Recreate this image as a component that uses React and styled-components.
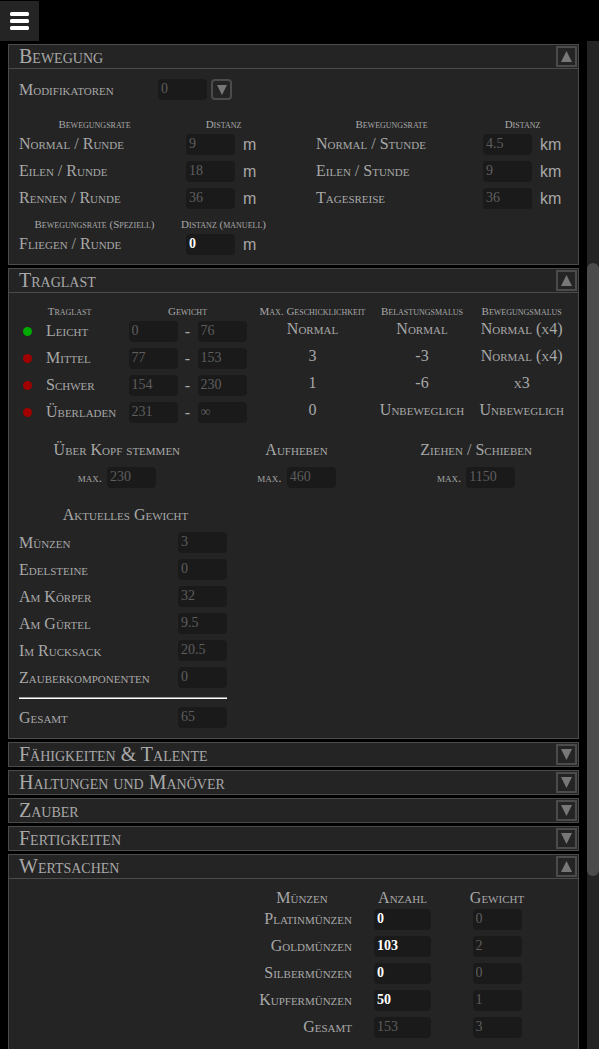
import React, { useState } from "react";
import styled, { createGlobalStyle } from "styled-components";

const serif = `"Liberation Serif", serif`;
const sans = `"Liberation Sans", sans-serif`;

const GlobalStyle = createGlobalStyle`
  *, *::before, *::after { box-sizing: border-box; }
  body {
    margin: 0;
    background: #000;
    color: #a8a8a8;
    font: 16px/20px ${serif};
  }
`;

const Page = styled.div`
  display: flex;
  flex-direction: column;
  height: 100vh;
`;

const TopBar = styled.header`
  padding-top: 1px;
  flex: none;
`;

const MenuButton = styled.button`
  display: flex;
  align-items: center;
  justify-content: center;
  width: 39px;
  height: 40px;
  padding: 0;
  border: 0;
  background: #242424;
  color: #fff;
`;

const Viewport = styled.div`
  display: flex;
  flex: 1;
  min-height: 0;
`;

const Sheet = styled.main`
  flex: 1;
  min-width: 0;
  padding: 3px 8px 0;
  overflow-y: auto;
  scrollbar-width: none;
  font-variant: small-caps;
`;

const ScrollTrack = styled.div`
  display: flex;
  flex-direction: column;
  flex: none;
  width: 12px;
  background: #242424;

  &::before { content: ""; flex: 222; }
  &::after { content: ""; flex: 173; }
`;

const ScrollThumb = styled.div`
  flex: 613;
  border-radius: 6px;
  background: #4b4b4b;
`;

const Panel = styled.section`
  margin-bottom: 3px;
  border: 1px solid #4b4b4b;
  background: #242424;
`;

const PanelHeader = styled.div`
  display: flex;
  align-items: center;
  justify-content: space-between;
  height: ${(p) => (p.$open ? 24 : 23)}px;
  padding: 0 1px 0 10px;
  border-bottom: ${(p) => (p.$open ? "1px solid #4b4b4b" : "0")};
`;

const PanelTitle = styled.h2`
  margin: 0;
  font-size: 20px;
  font-weight: normal;
  line-height: 23px;
`;

const ArrowButton = styled.button`
  display: flex;
  align-items: center;
  justify-content: center;
  flex: none;
  width: 21px;
  height: 21px;
  padding: 0;
  border: 2px solid #4b4b4b;
  border-radius: ${(p) => (p.$rounded ? 4 : 0)}px;
  background: #242424;
  color: #777;
`;

const PanelBody = styled.div`
  padding: ${(p) => p.$top}px 0 ${(p) => p.$bottom}px 10px;
`;

const ValueBox = styled.input`
  flex: none;
  width: ${(p) => (p.$wide ? 57 : 49)}px;
  height: 21px;
  padding: 0 3px 2px;
  border: 0;
  border-radius: 4px;
  outline: 0;
  background: #1a1a1a;
  color: ${(p) => (p.readOnly ? "#5e5e5e" : "#fff")};
  font: ${(p) => (p.readOnly ? "normal" : "bold")} 14px/18px ${serif};
`;

const ModifierRow = styled.div`
  display: flex;
  align-items: center;
  gap: 4px;
  margin-bottom: 18px;
`;

const ModifierLabel = styled.label`
  width: 135px;
`;

const MovementGrid = styled.div`
  display: grid;
  grid-template-columns: 297fr 262fr;
  row-gap: 6px;
`;

const DataTable = styled.table`
  width: ${(p) => p.$width || "100%"};
  border-collapse: collapse;
  table-layout: fixed;
`;

const HeadCell = styled.th`
  height: ${(p) => (p.$large ? 17 : 13)}px;
  padding: 0;
  font-size: ${(p) => (p.$large ? 16 : 11)}px;
  font-weight: normal;
  line-height: ${(p) => (p.$large ? 17 : 13)}px;
  text-align: center;
  white-space: nowrap;
`;

const LoadHeadCell = styled(HeadCell)`
  padding-right: 30px;
`;

const LabelCell = styled.th`
  height: 27px;
  padding: 0 0 2px;
  font-weight: normal;
  text-align: ${(p) => p.$align || "left"};
  white-space: nowrap;
`;

const Cell = styled.td`
  height: 27px;
  padding: 0;
`;

const ResultCell = styled(Cell)`
  padding-bottom: 6px;
  text-align: center;
  white-space: nowrap;
`;

const Measure = styled.div`
  display: flex;
  align-items: center;
  gap: 8px;
  padding-left: 16px;
`;

const Unit = styled.span`
  font-family: ${sans};
  font-variant: normal;
`;

const Range = styled.div`
  display: flex;
  align-items: center;
  justify-content: center;
`;

const Dash = styled.span`
  width: 20px;
  text-align: center;
`;

const StatusDot = styled.span`
  display: block;
  width: 9px;
  height: 9px;
  margin-left: 4px;
  border-radius: 50%;
  background: ${(p) => (p.$active ? "#00aa00" : "#a00000")};
`;

const LiftGrid = styled.div`
  display: grid;
  grid-template-columns: repeat(3, 1fr);
  margin: 14px 12px 17px 8px;
`;

const Lift = styled.div`
  display: flex;
  flex-direction: column;
  align-items: center;
  gap: 7px;
`;

const LiftLimit = styled.label`
  display: flex;
  align-items: center;
  gap: 5px;
  font-size: 13px;
`;

const WeightBlock = styled.div`
  width: 208px;
`;

const WeightTitle = styled.h3`
  margin: 0 0 4px;
  padding-left: 5px;
  font-size: 16px;
  font-weight: normal;
  line-height: 20px;
  text-align: center;
`;

const WeightRow = styled.div`
  display: flex;
  align-items: center;
  justify-content: space-between;
  height: 27px;
`;

const Rule = styled.hr`
  height: 2px;
  margin: 6px 0 5px;
  border: 0;
  border-top: 1px solid #999;
  background: #fff;
`;

const CoinTable = styled(DataTable)`
  margin-left: auto;
  margin-right: 37px;
`;

const Centered = styled.div`
  display: flex;
  justify-content: center;
`;

function Arrow({ up, size = 11 }) {
  return (
    <svg width={size} height={size} viewBox="0 0 11 11" aria-hidden="true">
      <path d={up ? "M5.5 0L11 11H0z" : "M0 0H11L5.5 11z"} fill="currentColor" />
    </svg>
  );
}

function Value({ value, editable, ...rest }) {
  return <ValueBox type="text" defaultValue={value} readOnly={!editable} {...rest} />;
}

function Section({ title, defaultOpen = false, top = 10, bottom = 10, children }) {
  const [open, setOpen] = useState(defaultOpen);
  return (
    <Panel>
      <PanelHeader $open={open}>
        <PanelTitle>{title}</PanelTitle>
        <ArrowButton
          type="button"
          aria-label={title}
          aria-expanded={open}
          onClick={() => setOpen(!open)}
        >
          <Arrow up={open} />
        </ArrowButton>
      </PanelHeader>
      {open && <PanelBody $top={top} $bottom={bottom}>{children}</PanelBody>}
    </Panel>
  );
}

function MovementTable({ id, heads, unit, rows, width }) {
  return (
    <DataTable $width={width}>
      <colgroup>
        <col width="151" />
        <col />
      </colgroup>
      <thead>
        <tr>
          {heads.map((h) => (
            <HeadCell key={h} scope="col">{h}</HeadCell>
          ))}
        </tr>
      </thead>
      <tbody>
        {rows.map(([name, value, editable], i) => (
          <tr key={name}>
            <LabelCell scope="row">
              <label htmlFor={id + i}>{name}</label>
            </LabelCell>
            <Cell>
              <Measure>
                <Value id={id + i} value={value} editable={editable} />
                <Unit>{unit}</Unit>
              </Measure>
            </Cell>
          </tr>
        ))}
      </tbody>
    </DataTable>
  );
}

const loads = [
  ["Leicht", "0", "76", "Normal", "Normal", "Normal (x4)"],
  ["Mittel", "77", "153", "3", "-3", "Normal (x4)"],
  ["Schwer", "154", "230", "1", "-6", "x3"],
  ["Überladen", "231", "∞", "0", "Unbeweglich", "Unbeweglich"],
];

const lifts = [
  ["Über Kopf stemmen", "230"],
  ["Aufheben", "460"],
  ["Ziehen / Schieben", "1150"],
];

const weights = [
  ["Münzen", "3"],
  ["Edelsteine", "0"],
  ["Am Körper", "32"],
  ["Am Gürtel", "9.5"],
  ["Im Rucksack", "20.5"],
  ["Zauberkomponenten", "0"],
];

const coins = [
  ["Platinmünzen", "0", "0", true],
  ["Goldmünzen", "103", "2", true],
  ["Silbermünzen", "0", "0", true],
  ["Kupfermünzen", "50", "1", true],
  ["Gesamt", "153", "3", false],
];

function Weight({ id, name, value }) {
  return (
    <WeightRow>
      <label htmlFor={id}>{name}</label>
      <Value id={id} value={value} />
    </WeightRow>
  );
}

export default function App() {
  return (
    <Page>
      <GlobalStyle />
      <TopBar>
        <MenuButton type="button" aria-label="Menü">
          <svg width="19" height="18" viewBox="0 0 19 18" aria-hidden="true">
            <g fill="currentColor">
              <rect width="19" height="4" rx="1.5" />
              <rect y="7" width="19" height="4" rx="1.5" />
              <rect y="14" width="19" height="4" rx="1.5" />
            </g>
          </svg>
        </MenuButton>
      </TopBar>
      <Viewport>
        <Sheet>
          <Section title="Bewegung" defaultOpen bottom={6}>
            <ModifierRow>
              <ModifierLabel htmlFor="mod">Modifikatoren</ModifierLabel>
              <Value id="mod" value="0" />
              <ArrowButton type="button" $rounded aria-label="Modifikatoren anzeigen">
                <Arrow size={10} />
              </ArrowButton>
            </ModifierRow>
            <MovementGrid>
              <MovementTable
                id="runde"
                width="258px"
                heads={["Bewegungsrate", "Distanz"]}
                unit="m"
                rows={[
                  ["Normal / Runde", "9"],
                  ["Eilen / Runde", "18"],
                  ["Rennen / Runde", "36"],
                ]}
              />
              <MovementTable
                id="stunde"
                heads={["Bewegungsrate", "Distanz"]}
                unit="km"
                rows={[
                  ["Normal / Stunde", "4.5"],
                  ["Eilen / Stunde", "9"],
                  ["Tagesreise", "36"],
                ]}
              />
              <MovementTable
                id="speziell"
                width="258px"
                heads={["Bewegungsrate (Speziell)", "Distanz (manuell)"]}
                unit="m"
                rows={[["Fliegen / Runde", "0", true]]}
              />
            </MovementGrid>
          </Section>

          <Section title="Traglast" defaultOpen top={12} bottom={7}>
            <DataTable $width="99%">
              <colgroup>
                <col width="27" />
                <col width="77" />
                <col width="129" />
                <col width="121" />
                <col width="98" />
                <col />
              </colgroup>
              <thead>
                <tr>
                  <td />
                  <LoadHeadCell scope="col">Traglast</LoadHeadCell>
                  <HeadCell scope="col">Gewicht</HeadCell>
                  <HeadCell scope="col">Max. Geschicklichkeit</HeadCell>
                  <HeadCell scope="col">Belastungsmalus</HeadCell>
                  <HeadCell scope="col">Bewegungsmalus</HeadCell>
                </tr>
              </thead>
              <tbody>
                {loads.map(([name, from, to, ...results], i) => (
                  <tr key={name}>
                    <Cell><StatusDot $active={i === 0} /></Cell>
                    <LabelCell scope="row">{name}</LabelCell>
                    <Cell>
                      <Range>
                        <Value value={from} aria-label={`${name} von`} />
                        <Dash>-</Dash>
                        <Value value={to} aria-label={`${name} bis`} />
                      </Range>
                    </Cell>
                    {results.map((r, j) => (
                      <ResultCell key={j}>{r}</ResultCell>
                    ))}
                  </tr>
                ))}
              </tbody>
            </DataTable>
            <LiftGrid>
              {lifts.map(([name, max]) => (
                <Lift key={name}>
                  <span>{name}</span>
                  <LiftLimit>
                    max.
                    <Value value={max} />
                  </LiftLimit>
                </Lift>
              ))}
            </LiftGrid>
            <WeightBlock>
              <WeightTitle>Aktuelles Gewicht</WeightTitle>
              {weights.map(([name, value], i) => (
                <Weight key={name} id={`gewicht${i}`} name={name} value={value} />
              ))}
              <Rule />
              <Weight id="gewichtGesamt" name="Gesamt" value="65" />
            </WeightBlock>
          </Section>

          <Section title="Fähigkeiten & Talente" />
          <Section title="Haltungen und Manöver" />
          <Section title="Zauber" />
          <Section title="Fertigkeiten" />

          <Section title="Wertsachen" defaultOpen bottom={24}>
            <CoinTable $width="289px">
              <colgroup>
                <col width="100" />
                <col width="101" />
                <col width="88" />
              </colgroup>
              <thead>
                <tr>
                  <HeadCell scope="col" $large>Münzen</HeadCell>
                  <HeadCell scope="col" $large>Anzahl</HeadCell>
                  <HeadCell scope="col" $large>Gewicht</HeadCell>
                </tr>
              </thead>
              <tbody>
                {coins.map(([name, count, weight, editable], i) => (
                  <tr key={name}>
                    <LabelCell scope="row" $align="right">
                      <label htmlFor={`muenzen${i}`}>{name}</label>
                    </LabelCell>
                    <Cell>
                      <Centered>
                        <Value id={`muenzen${i}`} value={count} editable={editable} $wide />
                      </Centered>
                    </Cell>
                    <Cell>
                      <Centered>
                        <Value value={weight} aria-label={`${name} Gewicht`} />
                      </Centered>
                    </Cell>
                  </tr>
                ))}
              </tbody>
            </CoinTable>
          </Section>
        </Sheet>
        <ScrollTrack aria-hidden="true">
          <ScrollThumb />
        </ScrollTrack>
      </Viewport>
    </Page>
  );
}
